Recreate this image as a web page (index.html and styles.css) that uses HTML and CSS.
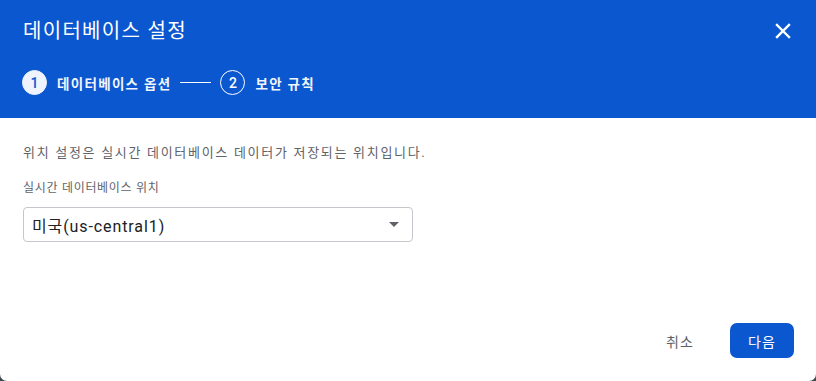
FILE: index.html
```html
<!DOCTYPE html>
<html lang="ko">
<head>
<meta charset="utf-8">
<link rel="stylesheet" href="styles.css">
</head>
<body>
<div class="dialog">
  <header class="head">
    <div class="title-row">
      <h1 class="title">데이터베이스 설정</h1>
      <button class="close" aria-label="닫기">
        <svg width="16" height="16" viewBox="0 0 16 16"><path d="M2 2L14 14M14 2L2 14" stroke="#fff" stroke-width="2.4" stroke-linecap="square"/></svg>
      </button>
    </div>
    <div class="steps">
      <div class="step active"><span class="num">1</span><span class="label">데이터베이스 옵션</span></div>
      <span class="line"></span>
      <div class="step"><span class="num">2</span><span class="label">보안 규칙</span></div>
    </div>
  </header>
  <main class="body">
    <p class="desc">위치 설정은 실시간 데이터베이스 데이터가 저장되는 위치입니다.</p>
    <label class="field-label">실시간 데이터베이스 위치</label>
    <div class="select">
      <span class="value">미국(us-central1)</span>
      <span class="arrow"></span>
    </div>
  </main>
  <footer class="foot">
    <button class="btn text">취소</button>
    <button class="btn primary">다음</button>
  </footer>
</div>
</body>
</html>
```
FILE: styles.css
```css
* { box-sizing: border-box; }
html, body { margin: 0; padding: 0; height: 100%; }
body {
  background: #3c4a50;
  font-family: Roboto, "Noto Sans CJK KR", sans-serif;
}
.dialog {
  width: 816px;
  height: 381px;
  background: #fff;
  border-radius: 0 0 7px 7px;
  display: flex;
  flex-direction: column;
  overflow: hidden;
}
.head {
  background: #0b57d0;
  height: 118px;
  padding: 17px 23px 0 23px;
  color: #fff;
}
.title-row {
  display: flex;
  align-items: center;
  justify-content: space-between;
}
.title {
  margin: 0;
  font-size: 20px;
  font-weight: 400;
  line-height: 28px;
  letter-spacing: 1.3px;
}
.close {
  background: none;
  border: 0;
  padding: 0;
  margin-right: 2px;
  width: 16px;
  height: 16px;
  display: flex;
}
.steps {
  display: flex;
  align-items: center;
  margin-top: 25px;
  margin-left: -1px;
}
.step {
  display: flex;
  align-items: center;
}
.num {
  width: 25px;
  height: 25px;
  border-radius: 50%;
  border: 1.5px solid #fff;
  display: flex;
  align-items: center;
  justify-content: center;
  font-size: 14px;
  font-weight: 500;
  color: #fff;
}
.step.active .num {
  background: #eef3fd;
  color: #0b57d0;
  border-color: #eef3fd;
}
.label {
  margin-left: 10px;
  font-size: 13.5px;
  font-weight: 700;
  color: #f1f4fa;
  letter-spacing: 1.3px;
}
.line {
  width: 31px;
  height: 1px;
  background: #fff;
  margin: 0 9px 0 9px;
}
.body {
  flex: 1;
  padding: 26px 23px 0 23px;
}
.desc {
  margin: 0;
  font-size: 13px;
  color: #5f6368;
  line-height: 18px;
  letter-spacing: 1.7px;
}
.field-label {
  display: block;
  margin-top: 18px;
  font-size: 12px;
  color: #5f6368;
  line-height: 16px;
  letter-spacing: 0.7px;
}
.select {
  margin-top: 11px;
  width: 390px;
  height: 35px;
  border: 1px solid #c4c7cc;
  border-radius: 4px;
  display: flex;
  align-items: center;
  justify-content: space-between;
  padding: 0 13px 0 8px;
}
.value {
  font-size: 16px;
  color: #202124;
  letter-spacing: 0.9px;
}
.arrow {
  width: 0;
  height: 0;
  border-left: 5px solid transparent;
  border-right: 5px solid transparent;
  border-top: 5px solid #5f6368;
}
.foot {
  display: flex;
  justify-content: flex-end;
  align-items: center;
  gap: 20px;
  padding: 0 22px 23px 0;
}
.btn {
  font-family: Roboto, "Noto Sans CJK KR", sans-serif;
  font-size: 14px;
  border: 0;
  border-radius: 7px;
  height: 35px;
  padding: 0;
  cursor: pointer;
  letter-spacing: 1px;
}
.btn.text {
  background: none;
  color: #5f6368;
  width: 60px;
}
.btn.primary {
  background: #0b57d0;
  color: #fff;
  width: 64px;
}
```
